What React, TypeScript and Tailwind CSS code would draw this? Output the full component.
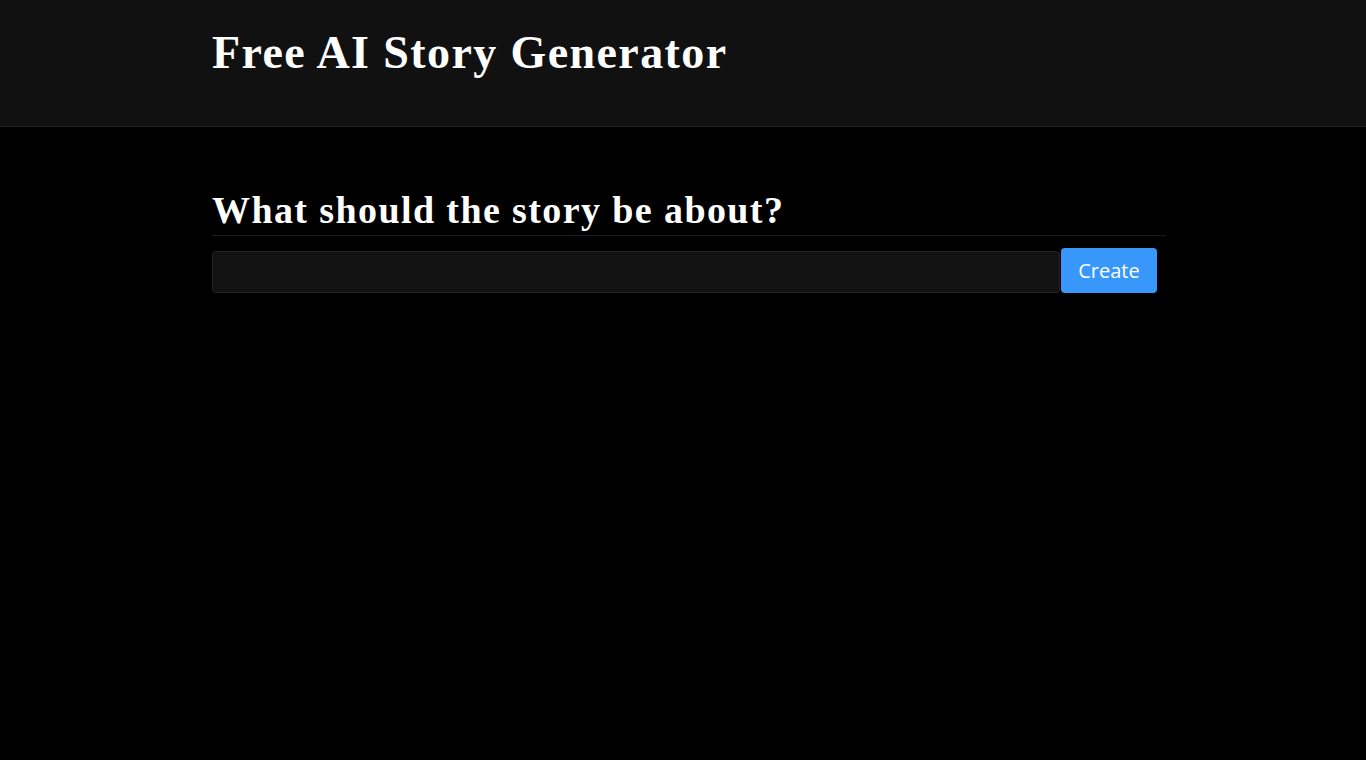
export default function App() {
  return (
    <div className="min-h-[760px] bg-black text-white">
      {/* Header */}
      <header className="h-[127px] bg-[#111111] border-b border-[#222222] pl-[212px] pt-[23px]">
        <h1 className="font-['Liberation_Serif',serif] font-bold text-[46px] leading-[60px] tracking-[1.4px]">
          Free AI Story Generator
        </h1>
      </header>

      <main className="pl-[212px] pr-[200px] pt-[58px]">
        <h2 className="font-['Liberation_Serif',serif] font-bold text-[38px] leading-[50px] border-b border-[#1c1c1c] tracking-[1.4px]">
          What should the story be about?
        </h2>
        <div className="flex items-end mt-[12px] pr-[9px]">
          <input
            type="text"
            className="flex-1 h-[42px] mb-0 bg-[#121212] border border-[#242424] rounded-[4px] px-3 text-white outline-none"
          />
          <button
            type="button"
            className="h-[45px] w-[96px] ml-[1px] bg-[#3797fa] rounded-[4px] text-white text-[20px] font-['Open_Sans',sans-serif]"
          >
            Create
          </button>
        </div>
      </main>
    </div>
  );
}
